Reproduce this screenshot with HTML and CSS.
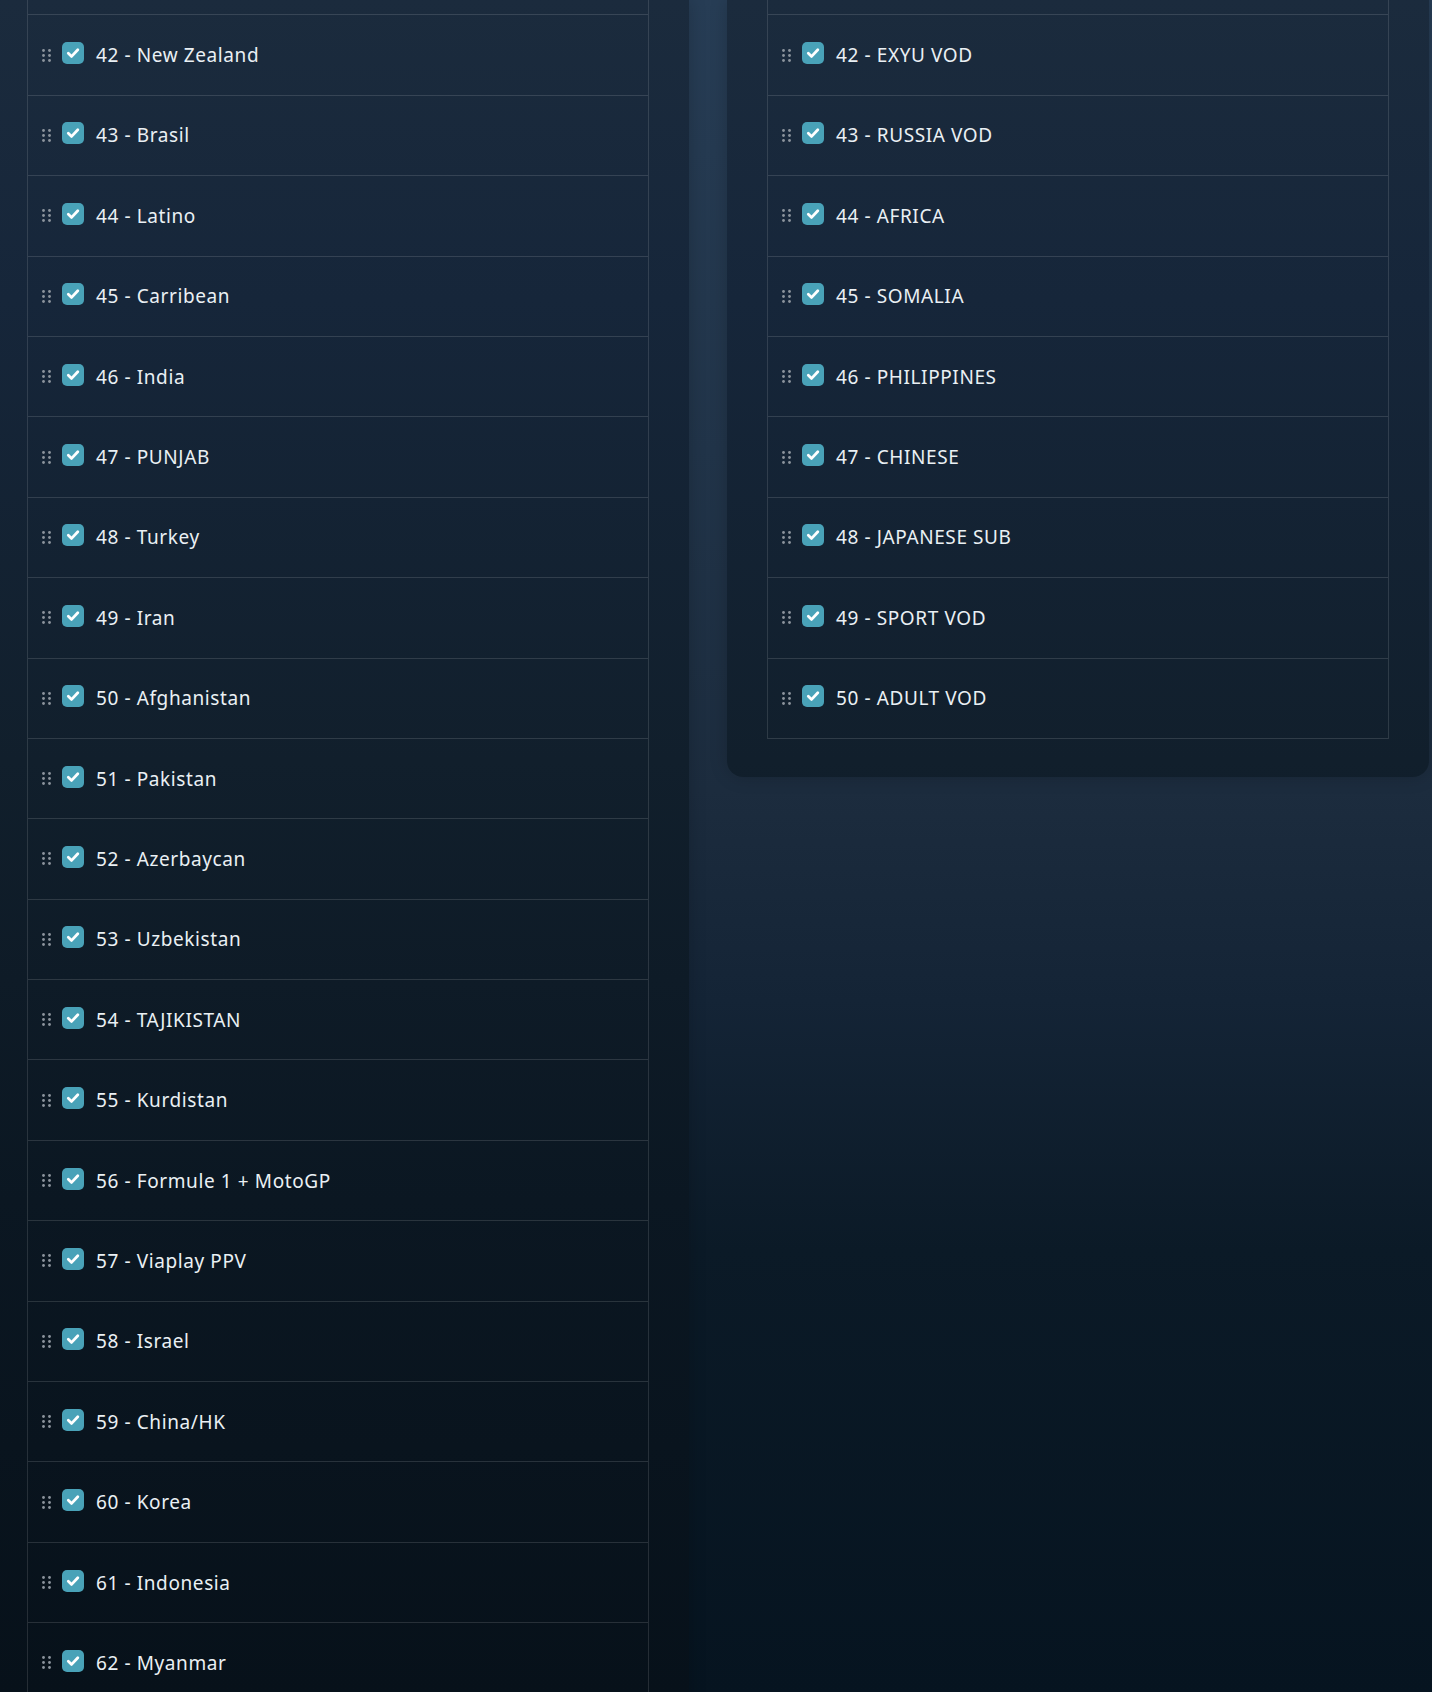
FILE: index.html
```html
<!doctype html>
<html lang="en">
  <head>
    <meta charset="UTF-8" />
    <title>Bouquet order</title>
    <link rel="stylesheet" href="styles.css">
  </head>
  <body>
    <div class="board">
      <!-- live categories -->
      <div class="card card-tall">
        <div class="channels">
          <div class="channels-cut"></div>
          <label class="channel"><span class="grip"><svg width="9" height="13" viewBox="0 0 9 13"><circle cx="1.5" cy="1.5" r="1.4"/><circle cx="7.5" cy="1.5" r="1.4"/><circle cx="1.5" cy="6.5" r="1.4"/><circle cx="7.5" cy="6.5" r="1.4"/><circle cx="1.5" cy="11.5" r="1.4"/><circle cx="7.5" cy="11.5" r="1.4"/></svg></span><span class="check"><svg width="22" height="22" viewBox="0 0 22 22"><path d="M6.3 11.2l3.3 3.2 6.2-6.6"/></svg></span><span class="name">42 - New Zealand</span></label>
          <label class="channel"><span class="grip"><svg width="9" height="13" viewBox="0 0 9 13"><circle cx="1.5" cy="1.5" r="1.4"/><circle cx="7.5" cy="1.5" r="1.4"/><circle cx="1.5" cy="6.5" r="1.4"/><circle cx="7.5" cy="6.5" r="1.4"/><circle cx="1.5" cy="11.5" r="1.4"/><circle cx="7.5" cy="11.5" r="1.4"/></svg></span><span class="check"><svg width="22" height="22" viewBox="0 0 22 22"><path d="M6.3 11.2l3.3 3.2 6.2-6.6"/></svg></span><span class="name">43 - Brasil</span></label>
          <label class="channel"><span class="grip"><svg width="9" height="13" viewBox="0 0 9 13"><circle cx="1.5" cy="1.5" r="1.4"/><circle cx="7.5" cy="1.5" r="1.4"/><circle cx="1.5" cy="6.5" r="1.4"/><circle cx="7.5" cy="6.5" r="1.4"/><circle cx="1.5" cy="11.5" r="1.4"/><circle cx="7.5" cy="11.5" r="1.4"/></svg></span><span class="check"><svg width="22" height="22" viewBox="0 0 22 22"><path d="M6.3 11.2l3.3 3.2 6.2-6.6"/></svg></span><span class="name">44 - Latino</span></label>
          <label class="channel"><span class="grip"><svg width="9" height="13" viewBox="0 0 9 13"><circle cx="1.5" cy="1.5" r="1.4"/><circle cx="7.5" cy="1.5" r="1.4"/><circle cx="1.5" cy="6.5" r="1.4"/><circle cx="7.5" cy="6.5" r="1.4"/><circle cx="1.5" cy="11.5" r="1.4"/><circle cx="7.5" cy="11.5" r="1.4"/></svg></span><span class="check"><svg width="22" height="22" viewBox="0 0 22 22"><path d="M6.3 11.2l3.3 3.2 6.2-6.6"/></svg></span><span class="name">45 - Carribean</span></label>
          <label class="channel"><span class="grip"><svg width="9" height="13" viewBox="0 0 9 13"><circle cx="1.5" cy="1.5" r="1.4"/><circle cx="7.5" cy="1.5" r="1.4"/><circle cx="1.5" cy="6.5" r="1.4"/><circle cx="7.5" cy="6.5" r="1.4"/><circle cx="1.5" cy="11.5" r="1.4"/><circle cx="7.5" cy="11.5" r="1.4"/></svg></span><span class="check"><svg width="22" height="22" viewBox="0 0 22 22"><path d="M6.3 11.2l3.3 3.2 6.2-6.6"/></svg></span><span class="name">46 - India</span></label>
          <label class="channel"><span class="grip"><svg width="9" height="13" viewBox="0 0 9 13"><circle cx="1.5" cy="1.5" r="1.4"/><circle cx="7.5" cy="1.5" r="1.4"/><circle cx="1.5" cy="6.5" r="1.4"/><circle cx="7.5" cy="6.5" r="1.4"/><circle cx="1.5" cy="11.5" r="1.4"/><circle cx="7.5" cy="11.5" r="1.4"/></svg></span><span class="check"><svg width="22" height="22" viewBox="0 0 22 22"><path d="M6.3 11.2l3.3 3.2 6.2-6.6"/></svg></span><span class="name">47 - PUNJAB</span></label>
          <label class="channel"><span class="grip"><svg width="9" height="13" viewBox="0 0 9 13"><circle cx="1.5" cy="1.5" r="1.4"/><circle cx="7.5" cy="1.5" r="1.4"/><circle cx="1.5" cy="6.5" r="1.4"/><circle cx="7.5" cy="6.5" r="1.4"/><circle cx="1.5" cy="11.5" r="1.4"/><circle cx="7.5" cy="11.5" r="1.4"/></svg></span><span class="check"><svg width="22" height="22" viewBox="0 0 22 22"><path d="M6.3 11.2l3.3 3.2 6.2-6.6"/></svg></span><span class="name">48 - Turkey</span></label>
          <label class="channel"><span class="grip"><svg width="9" height="13" viewBox="0 0 9 13"><circle cx="1.5" cy="1.5" r="1.4"/><circle cx="7.5" cy="1.5" r="1.4"/><circle cx="1.5" cy="6.5" r="1.4"/><circle cx="7.5" cy="6.5" r="1.4"/><circle cx="1.5" cy="11.5" r="1.4"/><circle cx="7.5" cy="11.5" r="1.4"/></svg></span><span class="check"><svg width="22" height="22" viewBox="0 0 22 22"><path d="M6.3 11.2l3.3 3.2 6.2-6.6"/></svg></span><span class="name">49 - Iran</span></label>
          <label class="channel"><span class="grip"><svg width="9" height="13" viewBox="0 0 9 13"><circle cx="1.5" cy="1.5" r="1.4"/><circle cx="7.5" cy="1.5" r="1.4"/><circle cx="1.5" cy="6.5" r="1.4"/><circle cx="7.5" cy="6.5" r="1.4"/><circle cx="1.5" cy="11.5" r="1.4"/><circle cx="7.5" cy="11.5" r="1.4"/></svg></span><span class="check"><svg width="22" height="22" viewBox="0 0 22 22"><path d="M6.3 11.2l3.3 3.2 6.2-6.6"/></svg></span><span class="name">50 - Afghanistan</span></label>
          <label class="channel"><span class="grip"><svg width="9" height="13" viewBox="0 0 9 13"><circle cx="1.5" cy="1.5" r="1.4"/><circle cx="7.5" cy="1.5" r="1.4"/><circle cx="1.5" cy="6.5" r="1.4"/><circle cx="7.5" cy="6.5" r="1.4"/><circle cx="1.5" cy="11.5" r="1.4"/><circle cx="7.5" cy="11.5" r="1.4"/></svg></span><span class="check"><svg width="22" height="22" viewBox="0 0 22 22"><path d="M6.3 11.2l3.3 3.2 6.2-6.6"/></svg></span><span class="name">51 - Pakistan</span></label>
          <label class="channel"><span class="grip"><svg width="9" height="13" viewBox="0 0 9 13"><circle cx="1.5" cy="1.5" r="1.4"/><circle cx="7.5" cy="1.5" r="1.4"/><circle cx="1.5" cy="6.5" r="1.4"/><circle cx="7.5" cy="6.5" r="1.4"/><circle cx="1.5" cy="11.5" r="1.4"/><circle cx="7.5" cy="11.5" r="1.4"/></svg></span><span class="check"><svg width="22" height="22" viewBox="0 0 22 22"><path d="M6.3 11.2l3.3 3.2 6.2-6.6"/></svg></span><span class="name">52 - Azerbaycan</span></label>
          <label class="channel"><span class="grip"><svg width="9" height="13" viewBox="0 0 9 13"><circle cx="1.5" cy="1.5" r="1.4"/><circle cx="7.5" cy="1.5" r="1.4"/><circle cx="1.5" cy="6.5" r="1.4"/><circle cx="7.5" cy="6.5" r="1.4"/><circle cx="1.5" cy="11.5" r="1.4"/><circle cx="7.5" cy="11.5" r="1.4"/></svg></span><span class="check"><svg width="22" height="22" viewBox="0 0 22 22"><path d="M6.3 11.2l3.3 3.2 6.2-6.6"/></svg></span><span class="name">53 - Uzbekistan</span></label>
          <label class="channel"><span class="grip"><svg width="9" height="13" viewBox="0 0 9 13"><circle cx="1.5" cy="1.5" r="1.4"/><circle cx="7.5" cy="1.5" r="1.4"/><circle cx="1.5" cy="6.5" r="1.4"/><circle cx="7.5" cy="6.5" r="1.4"/><circle cx="1.5" cy="11.5" r="1.4"/><circle cx="7.5" cy="11.5" r="1.4"/></svg></span><span class="check"><svg width="22" height="22" viewBox="0 0 22 22"><path d="M6.3 11.2l3.3 3.2 6.2-6.6"/></svg></span><span class="name">54 - TAJIKISTAN</span></label>
          <label class="channel"><span class="grip"><svg width="9" height="13" viewBox="0 0 9 13"><circle cx="1.5" cy="1.5" r="1.4"/><circle cx="7.5" cy="1.5" r="1.4"/><circle cx="1.5" cy="6.5" r="1.4"/><circle cx="7.5" cy="6.5" r="1.4"/><circle cx="1.5" cy="11.5" r="1.4"/><circle cx="7.5" cy="11.5" r="1.4"/></svg></span><span class="check"><svg width="22" height="22" viewBox="0 0 22 22"><path d="M6.3 11.2l3.3 3.2 6.2-6.6"/></svg></span><span class="name">55 - Kurdistan</span></label>
          <label class="channel"><span class="grip"><svg width="9" height="13" viewBox="0 0 9 13"><circle cx="1.5" cy="1.5" r="1.4"/><circle cx="7.5" cy="1.5" r="1.4"/><circle cx="1.5" cy="6.5" r="1.4"/><circle cx="7.5" cy="6.5" r="1.4"/><circle cx="1.5" cy="11.5" r="1.4"/><circle cx="7.5" cy="11.5" r="1.4"/></svg></span><span class="check"><svg width="22" height="22" viewBox="0 0 22 22"><path d="M6.3 11.2l3.3 3.2 6.2-6.6"/></svg></span><span class="name">56 - Formule 1 + MotoGP</span></label>
          <label class="channel"><span class="grip"><svg width="9" height="13" viewBox="0 0 9 13"><circle cx="1.5" cy="1.5" r="1.4"/><circle cx="7.5" cy="1.5" r="1.4"/><circle cx="1.5" cy="6.5" r="1.4"/><circle cx="7.5" cy="6.5" r="1.4"/><circle cx="1.5" cy="11.5" r="1.4"/><circle cx="7.5" cy="11.5" r="1.4"/></svg></span><span class="check"><svg width="22" height="22" viewBox="0 0 22 22"><path d="M6.3 11.2l3.3 3.2 6.2-6.6"/></svg></span><span class="name">57 - Viaplay PPV</span></label>
          <label class="channel"><span class="grip"><svg width="9" height="13" viewBox="0 0 9 13"><circle cx="1.5" cy="1.5" r="1.4"/><circle cx="7.5" cy="1.5" r="1.4"/><circle cx="1.5" cy="6.5" r="1.4"/><circle cx="7.5" cy="6.5" r="1.4"/><circle cx="1.5" cy="11.5" r="1.4"/><circle cx="7.5" cy="11.5" r="1.4"/></svg></span><span class="check"><svg width="22" height="22" viewBox="0 0 22 22"><path d="M6.3 11.2l3.3 3.2 6.2-6.6"/></svg></span><span class="name">58 - Israel</span></label>
          <label class="channel"><span class="grip"><svg width="9" height="13" viewBox="0 0 9 13"><circle cx="1.5" cy="1.5" r="1.4"/><circle cx="7.5" cy="1.5" r="1.4"/><circle cx="1.5" cy="6.5" r="1.4"/><circle cx="7.5" cy="6.5" r="1.4"/><circle cx="1.5" cy="11.5" r="1.4"/><circle cx="7.5" cy="11.5" r="1.4"/></svg></span><span class="check"><svg width="22" height="22" viewBox="0 0 22 22"><path d="M6.3 11.2l3.3 3.2 6.2-6.6"/></svg></span><span class="name">59 - China/HK</span></label>
          <label class="channel"><span class="grip"><svg width="9" height="13" viewBox="0 0 9 13"><circle cx="1.5" cy="1.5" r="1.4"/><circle cx="7.5" cy="1.5" r="1.4"/><circle cx="1.5" cy="6.5" r="1.4"/><circle cx="7.5" cy="6.5" r="1.4"/><circle cx="1.5" cy="11.5" r="1.4"/><circle cx="7.5" cy="11.5" r="1.4"/></svg></span><span class="check"><svg width="22" height="22" viewBox="0 0 22 22"><path d="M6.3 11.2l3.3 3.2 6.2-6.6"/></svg></span><span class="name">60 - Korea</span></label>
          <label class="channel"><span class="grip"><svg width="9" height="13" viewBox="0 0 9 13"><circle cx="1.5" cy="1.5" r="1.4"/><circle cx="7.5" cy="1.5" r="1.4"/><circle cx="1.5" cy="6.5" r="1.4"/><circle cx="7.5" cy="6.5" r="1.4"/><circle cx="1.5" cy="11.5" r="1.4"/><circle cx="7.5" cy="11.5" r="1.4"/></svg></span><span class="check"><svg width="22" height="22" viewBox="0 0 22 22"><path d="M6.3 11.2l3.3 3.2 6.2-6.6"/></svg></span><span class="name">61 - Indonesia</span></label>
          <label class="channel"><span class="grip"><svg width="9" height="13" viewBox="0 0 9 13"><circle cx="1.5" cy="1.5" r="1.4"/><circle cx="7.5" cy="1.5" r="1.4"/><circle cx="1.5" cy="6.5" r="1.4"/><circle cx="7.5" cy="6.5" r="1.4"/><circle cx="1.5" cy="11.5" r="1.4"/><circle cx="7.5" cy="11.5" r="1.4"/></svg></span><span class="check"><svg width="22" height="22" viewBox="0 0 22 22"><path d="M6.3 11.2l3.3 3.2 6.2-6.6"/></svg></span><span class="name">62 - Myanmar</span></label>
        </div>
      </div>

      <!-- vod categories -->
      <div class="card">
        <div class="channels">
          <div class="channels-cut"></div>
          <label class="channel"><span class="grip"><svg width="9" height="13" viewBox="0 0 9 13"><circle cx="1.5" cy="1.5" r="1.4"/><circle cx="7.5" cy="1.5" r="1.4"/><circle cx="1.5" cy="6.5" r="1.4"/><circle cx="7.5" cy="6.5" r="1.4"/><circle cx="1.5" cy="11.5" r="1.4"/><circle cx="7.5" cy="11.5" r="1.4"/></svg></span><span class="check"><svg width="22" height="22" viewBox="0 0 22 22"><path d="M6.3 11.2l3.3 3.2 6.2-6.6"/></svg></span><span class="name">42 - EXYU VOD</span></label>
          <label class="channel"><span class="grip"><svg width="9" height="13" viewBox="0 0 9 13"><circle cx="1.5" cy="1.5" r="1.4"/><circle cx="7.5" cy="1.5" r="1.4"/><circle cx="1.5" cy="6.5" r="1.4"/><circle cx="7.5" cy="6.5" r="1.4"/><circle cx="1.5" cy="11.5" r="1.4"/><circle cx="7.5" cy="11.5" r="1.4"/></svg></span><span class="check"><svg width="22" height="22" viewBox="0 0 22 22"><path d="M6.3 11.2l3.3 3.2 6.2-6.6"/></svg></span><span class="name">43 - RUSSIA VOD</span></label>
          <label class="channel"><span class="grip"><svg width="9" height="13" viewBox="0 0 9 13"><circle cx="1.5" cy="1.5" r="1.4"/><circle cx="7.5" cy="1.5" r="1.4"/><circle cx="1.5" cy="6.5" r="1.4"/><circle cx="7.5" cy="6.5" r="1.4"/><circle cx="1.5" cy="11.5" r="1.4"/><circle cx="7.5" cy="11.5" r="1.4"/></svg></span><span class="check"><svg width="22" height="22" viewBox="0 0 22 22"><path d="M6.3 11.2l3.3 3.2 6.2-6.6"/></svg></span><span class="name">44 - AFRICA</span></label>
          <label class="channel"><span class="grip"><svg width="9" height="13" viewBox="0 0 9 13"><circle cx="1.5" cy="1.5" r="1.4"/><circle cx="7.5" cy="1.5" r="1.4"/><circle cx="1.5" cy="6.5" r="1.4"/><circle cx="7.5" cy="6.5" r="1.4"/><circle cx="1.5" cy="11.5" r="1.4"/><circle cx="7.5" cy="11.5" r="1.4"/></svg></span><span class="check"><svg width="22" height="22" viewBox="0 0 22 22"><path d="M6.3 11.2l3.3 3.2 6.2-6.6"/></svg></span><span class="name">45 - SOMALIA</span></label>
          <label class="channel"><span class="grip"><svg width="9" height="13" viewBox="0 0 9 13"><circle cx="1.5" cy="1.5" r="1.4"/><circle cx="7.5" cy="1.5" r="1.4"/><circle cx="1.5" cy="6.5" r="1.4"/><circle cx="7.5" cy="6.5" r="1.4"/><circle cx="1.5" cy="11.5" r="1.4"/><circle cx="7.5" cy="11.5" r="1.4"/></svg></span><span class="check"><svg width="22" height="22" viewBox="0 0 22 22"><path d="M6.3 11.2l3.3 3.2 6.2-6.6"/></svg></span><span class="name">46 - PHILIPPINES</span></label>
          <label class="channel"><span class="grip"><svg width="9" height="13" viewBox="0 0 9 13"><circle cx="1.5" cy="1.5" r="1.4"/><circle cx="7.5" cy="1.5" r="1.4"/><circle cx="1.5" cy="6.5" r="1.4"/><circle cx="7.5" cy="6.5" r="1.4"/><circle cx="1.5" cy="11.5" r="1.4"/><circle cx="7.5" cy="11.5" r="1.4"/></svg></span><span class="check"><svg width="22" height="22" viewBox="0 0 22 22"><path d="M6.3 11.2l3.3 3.2 6.2-6.6"/></svg></span><span class="name">47 - CHINESE</span></label>
          <label class="channel"><span class="grip"><svg width="9" height="13" viewBox="0 0 9 13"><circle cx="1.5" cy="1.5" r="1.4"/><circle cx="7.5" cy="1.5" r="1.4"/><circle cx="1.5" cy="6.5" r="1.4"/><circle cx="7.5" cy="6.5" r="1.4"/><circle cx="1.5" cy="11.5" r="1.4"/><circle cx="7.5" cy="11.5" r="1.4"/></svg></span><span class="check"><svg width="22" height="22" viewBox="0 0 22 22"><path d="M6.3 11.2l3.3 3.2 6.2-6.6"/></svg></span><span class="name">48 - JAPANESE SUB</span></label>
          <label class="channel"><span class="grip"><svg width="9" height="13" viewBox="0 0 9 13"><circle cx="1.5" cy="1.5" r="1.4"/><circle cx="7.5" cy="1.5" r="1.4"/><circle cx="1.5" cy="6.5" r="1.4"/><circle cx="7.5" cy="6.5" r="1.4"/><circle cx="1.5" cy="11.5" r="1.4"/><circle cx="7.5" cy="11.5" r="1.4"/></svg></span><span class="check"><svg width="22" height="22" viewBox="0 0 22 22"><path d="M6.3 11.2l3.3 3.2 6.2-6.6"/></svg></span><span class="name">49 - SPORT VOD</span></label>
          <label class="channel"><span class="grip"><svg width="9" height="13" viewBox="0 0 9 13"><circle cx="1.5" cy="1.5" r="1.4"/><circle cx="7.5" cy="1.5" r="1.4"/><circle cx="1.5" cy="6.5" r="1.4"/><circle cx="7.5" cy="6.5" r="1.4"/><circle cx="1.5" cy="11.5" r="1.4"/><circle cx="7.5" cy="11.5" r="1.4"/></svg></span><span class="check"><svg width="22" height="22" viewBox="0 0 22 22"><path d="M6.3 11.2l3.3 3.2 6.2-6.6"/></svg></span><span class="name">50 - ADULT VOD</span></label>
        </div>
      </div>
    </div>
  </body>
</html>
```

FILE: styles.css
```css
* {
  box-sizing: border-box;
}

html,
body {
  height: 100%;
}

body {
  margin: 0;
  overflow: hidden;
  font-family: "Noto Sans", "Open Sans", sans-serif;
  color: #eaf0f4;
  background: linear-gradient(
    180deg,
    #273d55 0,
    #213449 450px,
    #1c2c3e 790px,
    #142436 1000px,
    #0b1a27 1250px,
    #061420 100%
  );
}

/* two columns, page is scrolled a bit to the right */
.board {
  display: grid;
  grid-template-columns: 702px 702px;
  gap: 38px;
  align-items: start;
  margin-left: -13px;
}

.card {
  padding: 0 40px 38px;
  border-radius: 0 0 16px 16px;
  background: linear-gradient(
      180deg,
      #1b2b3d 0,
      #16263a 300px,
      #111f2c 760px,
      #0b1722 1200px,
      #07111a 100%
    )
    fixed;
  box-shadow: 0 0 18px rgba(0, 0, 0, 0.18);
}

.card-tall {
  min-height: 100vh;
}

.channels {
  border-left: 1px solid rgba(255, 255, 255, 0.12);
  border-right: 1px solid rgba(255, 255, 255, 0.12);
}

.channels-cut {
  height: 15.4px;
  border-bottom: 1px solid rgba(255, 255, 255, 0.13);
}

.channel {
  display: flex;
  align-items: center;
  height: 80.4px;
  padding-left: 14px;
  border-bottom: 1px solid rgba(255, 255, 255, 0.13);
  cursor: pointer;
}

.grip {
  display: flex;
  width: 9px;
  margin-right: 11px;
}

.grip svg {
  fill: #8c949d;
}

.check {
  display: flex;
  width: 22px;
  height: 22px;
  margin-right: 12px;
  margin-bottom: 4px;
  border-radius: 5px;
  background-color: #49a2b8;
}

.check svg path {
  fill: none;
  stroke: #fff;
  stroke-width: 2.8;
  stroke-linecap: round;
  stroke-linejoin: round;
}

.name {
  font-size: 19px;
  line-height: 28px;
  letter-spacing: 0.6px;
}
```
